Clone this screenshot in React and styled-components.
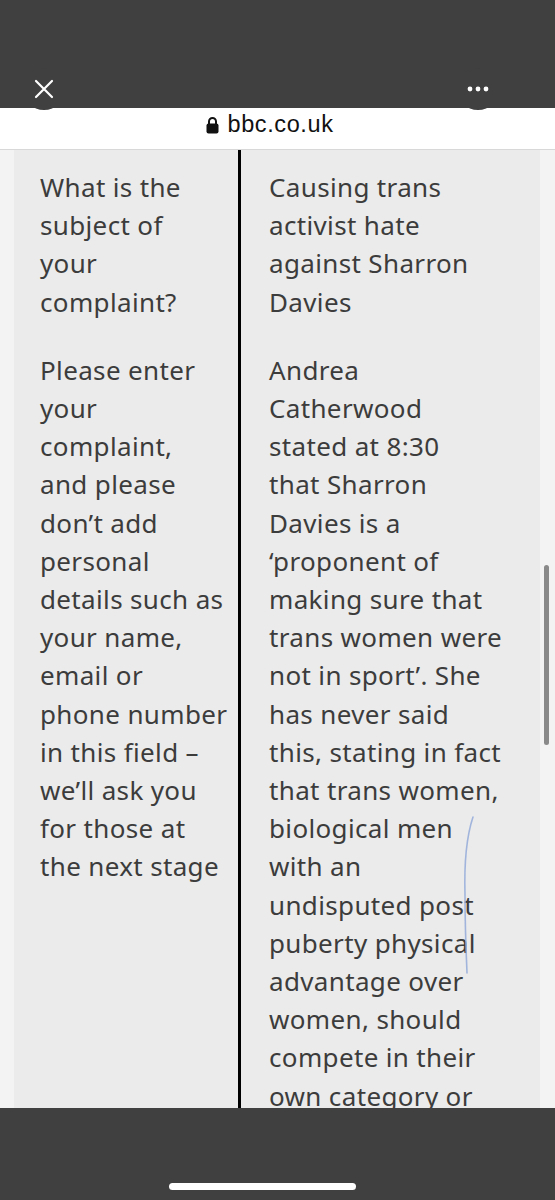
import React from 'react';
import styled, { createGlobalStyle } from 'styled-components';

const GlobalStyle = createGlobalStyle`
  html, body {
    margin: 0;
    padding: 0;
    background: #404040;
  }
  * { box-sizing: border-box; }
`;

const Screen = styled.div`
  width: 555px;
  height: 1200px;
  display: flex;
  flex-direction: column;
  position: relative;
  overflow: hidden;
  font-family: "Noto Sans", "Open Sans", sans-serif;
`;

const TopBar = styled.div`
  height: 108px;
  flex: none;
  background: #404040;
  display: flex;
  align-items: flex-end;
  justify-content: space-between;
  padding: 0 56px 0 23px;
  position: relative;
  z-index: 2;
`;

const RoundButton = styled.div`
  width: 42px;
  height: 42px;
  border-radius: 50%;
  background: #404040;
  margin-bottom: -2px;
  display: flex;
  align-items: center;
  justify-content: center;
  color: #fff;
`;

const AddressBar = styled.div`
  height: 42px;
  flex: none;
  background: #fff;
  border-bottom: 1px solid #d8d8d8;
  display: flex;
  align-items: flex-start;
  justify-content: center;
  padding: 2px 16px 0 0;
  gap: 9px;
  font-family: "Liberation Sans", Arial, sans-serif;
  font-size: 23.5px;
  color: #111;
`;

const Domain = styled.span`
  line-height: 28px;
  letter-spacing: 0.6px;
`;

const Viewport = styled.div`
  flex: 1;
  min-height: 0;
  overflow: hidden;
  background: #f3f3f3;
  padding: 0 15px 0 14px;
  position: relative;
`;

const Table = styled.div`
  background: #ebebeb;
  display: grid;
  grid-template-columns: 224px 1fr;
`;

const Cell = styled.div`
  padding: ${p => (p.$right ? '18px 10px 12px 28px' : '18px 4px 12px 26px')};
  border-left: ${p => (p.$right ? '3px solid #000' : 'none')};
  font-size: 26px;
  line-height: 38.2px;
  color: #3c3c3c;
  white-space: nowrap;
  letter-spacing: 0.35px;
`;

const Line = styled.div``;

const Scrollbar = styled.div`
  position: absolute;
  right: 6px;
  top: 415px;
  width: 5px;
  height: 180px;
  border-radius: 3px;
  background: #8a8a8a;
`;

const PenMark = styled.svg`
  position: absolute;
  left: 455px;
  top: 665px;
  pointer-events: none;
`;

const BottomBar = styled.div`
  height: 92px;
  flex: none;
  background: #404040;
  display: flex;
  align-items: flex-end;
  justify-content: center;
  padding-bottom: 10px;
  position: relative;
  z-index: 2;
`;

const HomeIndicator = styled.div`
  width: 187px;
  height: 7px;
  border-radius: 4px;
  background: #fff;
  margin-left: -30px;
`;

const rows = [
  {
    left: ['What is the', 'subject of', 'your', 'complaint?'],
    right: ['Causing trans', 'activist hate', 'against Sharron', 'Davies'],
  },
  {
    left: [
      'Please enter', 'your', 'complaint,', 'and please', 'don’t add', 'personal',
      'details such as', 'your name,', 'email or', 'phone number', 'in this field –',
      'we’ll ask you', 'for those at', 'the next stage',
    ],
    right: [
      'Andrea', 'Catherwood', 'stated at 8:30', 'that Sharron', 'Davies is a',
      '‘proponent of', 'making sure that', 'trans women were', 'not in sport’. She',
      'has never said', 'this, stating in fact', 'that trans women,', 'biological men',
      'with an', 'undisputed post', 'puberty physical', 'advantage over',
      'women, should', 'compete in their', 'own category or',
    ],
  },
];

function Lock() {
  return (
    <svg width="13" height="18" viewBox="0 0 13 18" style={{ marginTop: 6 }}>
      <path d="M3 8V5.5a3.5 3.5 0 0 1 7 0V8" fill="none" stroke="#111" strokeWidth="2" />
      <rect x="0.5" y="7.5" width="12" height="10" rx="2" fill="#111" />
    </svg>
  );
}

export default function App() {
  return (
    <>
      <GlobalStyle />
      <Screen>
        <TopBar>
          <RoundButton>
            <svg width="20" height="20" viewBox="0 0 20 20">
              <path d="M2 2L18 18M18 2L2 18" stroke="#fff" strokeWidth="2.2" strokeLinecap="round" />
            </svg>
          </RoundButton>
          <RoundButton>
            <svg width="22" height="6" viewBox="0 0 22 6">
              <circle cx="3" cy="3" r="2.4" fill="#fff" />
              <circle cx="11" cy="3" r="2.4" fill="#fff" />
              <circle cx="19" cy="3" r="2.4" fill="#fff" />
            </svg>
          </RoundButton>
        </TopBar>
        <AddressBar>
          <Lock />
          <Domain>bbc.co.uk</Domain>
        </AddressBar>
        <Viewport>
          <Table>
            {rows.map((row, i) => (
              <React.Fragment key={i}>
                <Cell>
                  {row.left.map((l, j) => <Line key={j}>{l}</Line>)}
                </Cell>
                <Cell $right>
                  {row.right.map((l, j) => <Line key={j}>{l}</Line>)}
                </Cell>
              </React.Fragment>
            ))}
          </Table>
          <PenMark width="24" height="160" viewBox="0 0 24 160">
            <path d="M18 2 C12 20 9 45 10 80 C10 110 11 135 12 158" fill="none" stroke="#8fa8d8" strokeWidth="1.6" strokeLinecap="round" opacity="0.8" />
          </PenMark>
          <Scrollbar />
        </Viewport>
        <BottomBar>
          <HomeIndicator />
        </BottomBar>
      </Screen>
    </>
  );
}
